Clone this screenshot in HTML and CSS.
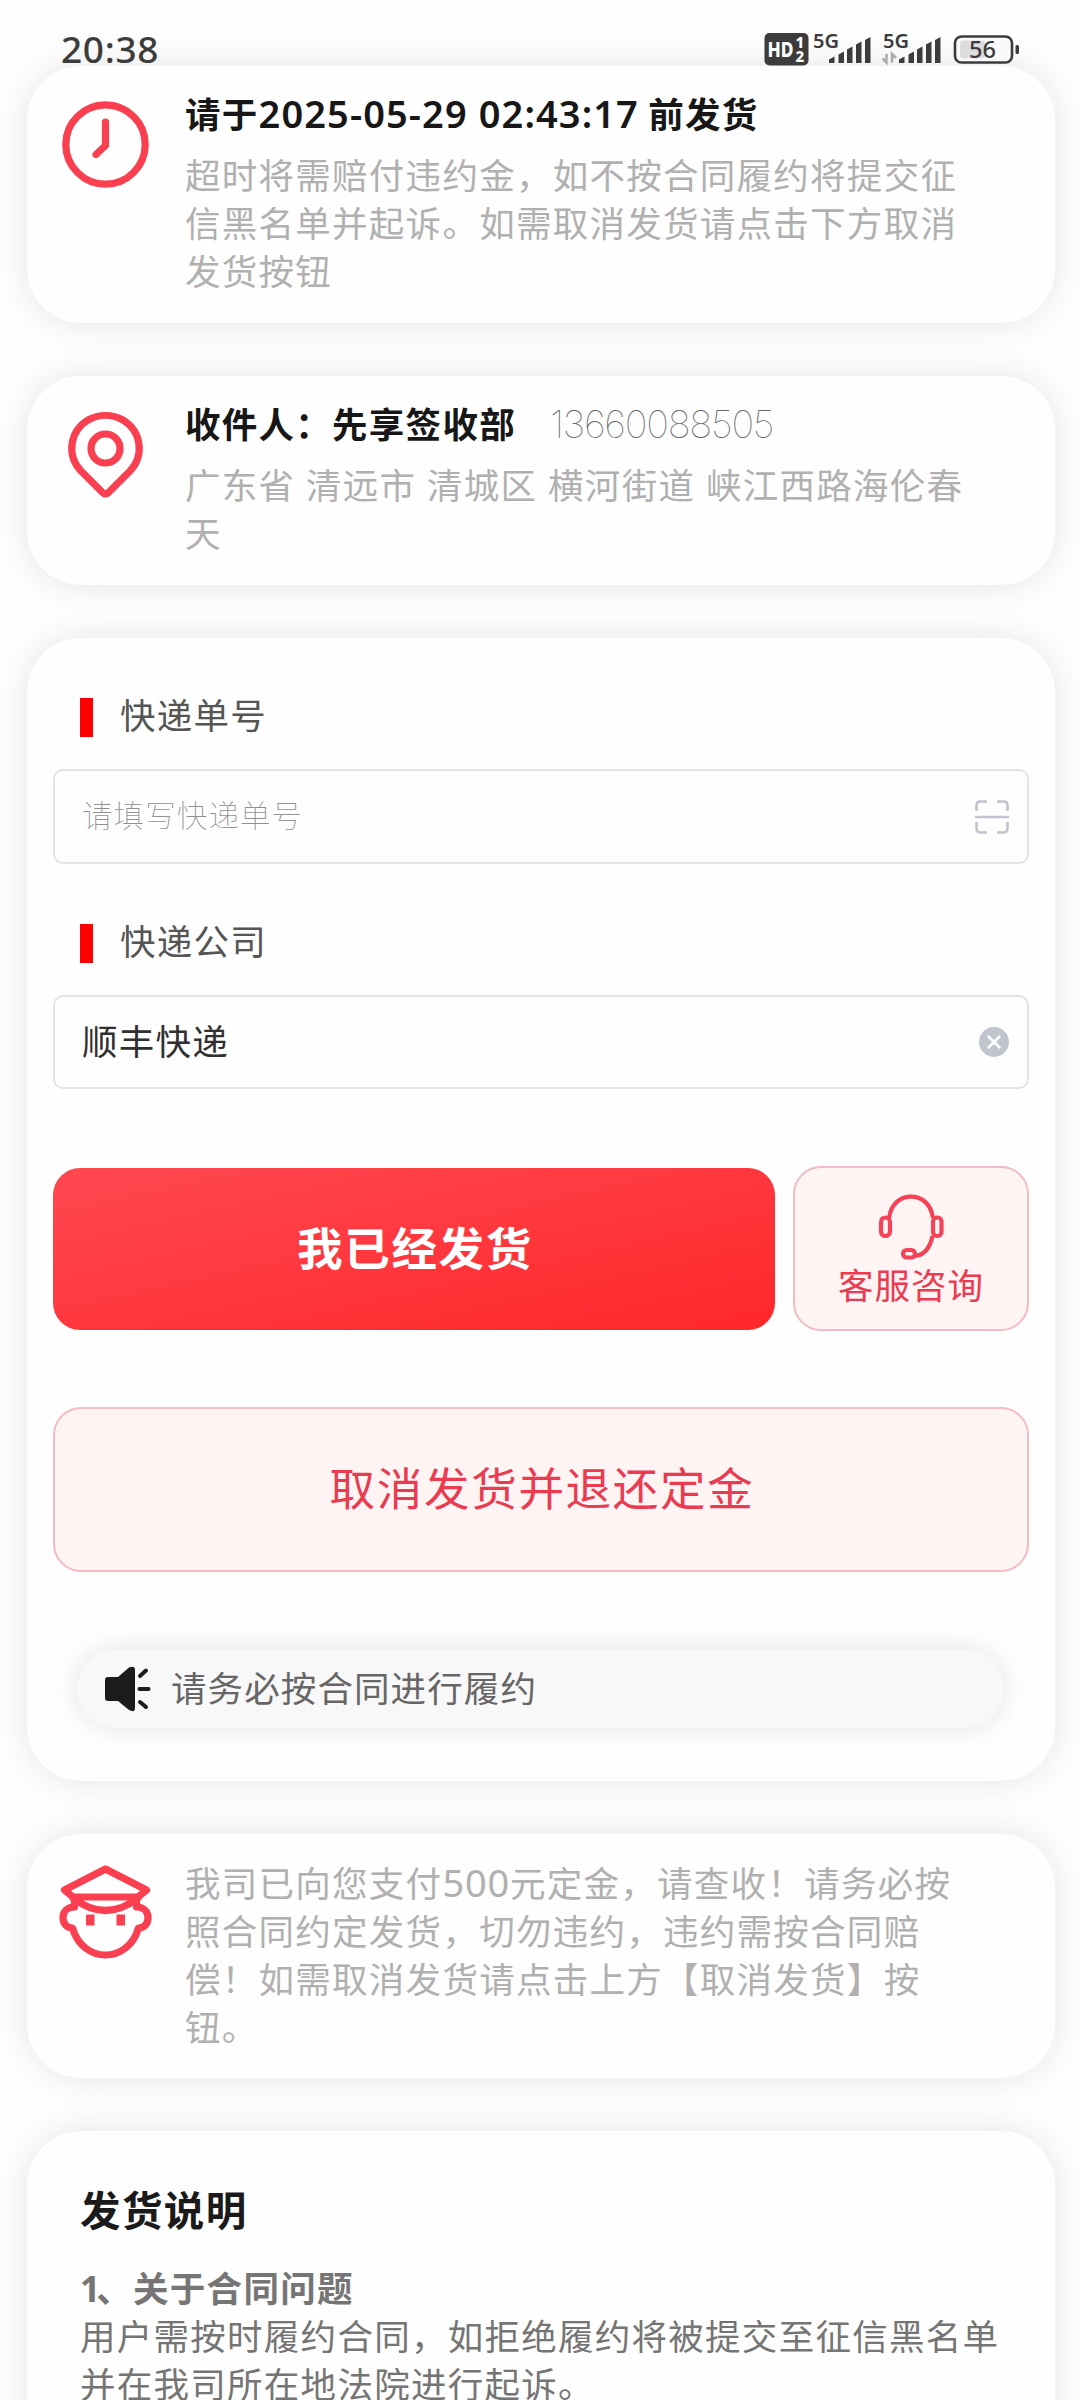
FILE: index.html
```html
<!DOCTYPE html>
<html lang="zh-CN">
<head>
<meta charset="utf-8">
<title>发货</title>
<link rel="stylesheet" href="styles.css">
</head>
<body>
<div class="screen">
  <header class="status">
    <span class="clock">20:38</span>
    <span class="indicators">
      <svg class="status-icons" viewBox="764 30 260 38">
        <rect x="764.5" y="33" width="44" height="32.500" rx="5" fill="#3c3c3c"/>
        <text class="hd" x="767.500" y="56.500" textLength="26" lengthAdjust="spacingAndGlyphs">HD</text>
        <text class="sim" x="795.500" y="47.500">1</text>
        <text class="sim" x="795.500" y="61.500">2</text>
        <text class="net" x="813" y="48.200" textLength="26" lengthAdjust="spacingAndGlyphs">5G</text>
        <text class="net" x="883" y="48.200" textLength="26" lengthAdjust="spacingAndGlyphs">5G</text>
        <g fill="#3c3c3c">
          <path d="M829 59.500l5.500-3v6.500h-5.500zM838.500 54.500l5.500-3v11.500h-5.500zM847 49.500l5.500-3v16.500h-5.500zM856 44.500l5.500-3v21.500h-5.500zM865 40l5.500-3v26h-5.500z"/>
          <path d="M899 59.500l5.500-3v6.500h-5.500zM908.500 54.500l5.500-3v11.500h-5.500zM917 49.500l5.500-3v16.500h-5.500zM926 44.500l5.500-3v21.500h-5.500zM935 40l5.500-3v26h-5.500z"/>
        </g>
        <path d="M886.500 54v8.500l-4-4M892 62.500V54l4 4" fill="none" stroke="#aaa" stroke-width="2.500"/>
        <rect x="955" y="36.500" width="57" height="26" rx="6.500" fill="#fafafa" stroke="#3c3c3c" stroke-width="2.600"/>
        <rect x="960" y="40.500" width="25" height="18" rx="3" fill="#ddd"/>
        <rect x="1015.500" y="45" width="3.500" height="9" rx="1.500" fill="#3c3c3c"/>
        <text class="battery" x="969" y="58" textLength="27" lengthAdjust="spacingAndGlyphs">56</text>
      </svg>
    </span>
  </header>

  <main class="cards">
    <section class="card info deadline">
      <svg class="icon" viewBox="0 0 96 96"><circle cx="48.500" cy="48.500" r="39.700" class="line"/><path class="line" d="M48.500 26V49.500L39 58.500"/></svg>
      <div class="body">
        <h2>请于<span class="num">2025-05-29 02:43:17</span> 前发货</h2>
        <p>超时将需赔付违约金，如不按合同履约将提交征信黑名单并起诉。如需取消发货请点击下方取消发货按钮</p>
      </div>
    </section>

    <section class="card info address">
      <svg class="icon" viewBox="0 0 96 96"><circle cx="48.500" cy="41.500" r="14.500" class="line"/><path class="line" d="M51.500 85.500Q48.500 88 45.500 85.500L24 64C9 48 13 24 31 13C42 7 55 7 66 13C84 24 88 48 73 64Z"/></svg>
      <div class="body">
        <h2>收件人：先享签收部<span class="phone">13660088505</span></h2>
        <p>广东省 清远市 清城区 横河街道 峡江西路海伦春天</p>
      </div>
    </section>

    <section class="card form">
      <label class="field-label"><span>快递单号</span></label>
      <div class="field">
        <span class="placeholder">请填写快递单号</span>
        <svg class="scan" viewBox="0 0 34 34"><path d="M1.500 11V5.500Q1.500 1.500 5.500 1.500H12M22 1.500H28.500Q32.500 1.500 32.500 5.500V11M1.500 22V28.500Q1.500 32.500 5.500 32.500H12M22 32.500H28.500Q32.500 32.500 32.500 28.500V22M0 17H34"/></svg>
      </div>
      <label class="field-label second"><span>快递公司</span></label>
      <div class="field company">
        <span class="value">顺丰快递</span>
        <svg class="clear" viewBox="0 0 30 30"><circle cx="15" cy="15" r="15" fill="#c0c4cc"/><path d="M9.500 9.500L20.500 20.500M20.500 9.500L9.500 20.500" stroke="#fff" stroke-width="2.500" stroke-linecap="round"/></svg>
      </div>
      <div class="actions">
        <button class="primary">我已经发货</button>
        <button class="outline service">
          <svg viewBox="0 0 66 66"><path d="M11 24C13 10 22 2.700 33 2.700S53 10 55 24M54.500 42C52 54 46 61 37 62"/><rect x="3" y="23.500" width="9" height="18.500" rx="4.500"/><rect x="55" y="23.500" width="8.500" height="18.500" rx="4"/><rect x="25" y="56" width="12" height="7.500" rx="3.700"/></svg>
          <span>客服咨询</span>
        </button>
      </div>
      <button class="outline cancel">取消发货并退还定金</button>
      <div class="notice">
        <svg viewBox="0 0 46 46"><path d="M0 14Q0 11 3 11H13L24 1.500Q30 -1 30 4V42Q30 47 24 44L13 35H3Q0 35 0 32Z" fill="#1c1c1c"/><path d="M35 10L41 4.500M34.500 23H43.500M35 36L41 41" stroke="#1c1c1c" stroke-width="4" stroke-linecap="round"/></svg>
        <span>请务必按合同进行履约</span>
      </div>
    </section>

    <section class="card info company-note">
      <svg class="icon" viewBox="0 0 96 96"><path class="line" d="M48.500 6L7.500 27L16 34H81L89.500 27ZM16 35Q48.500 60 81 35M17.500 35V44C2 44 3 65 15.500 65C26 101 71 101 81.500 65C94 65 95 44 79.500 44V35"/><path d="M29 51.500h8.500v11h-8.500zM59.500 51.500h8.500v11h-8.500z" fill="#fa3f50"/></svg>
      <div class="body">
        <p>我司已向您支付<span class="amount">500</span>元定金，请查收！请务必按照合同约定发货，切勿违约，违约需按合同赔偿！如需取消发货请点击上方【取消发货】按钮。</p>
      </div>
    </section>

    <section class="card help">
      <h3>发货说明</h3>
      <h4><span class="idx">1</span>、关于合同问题</h4>
      <p>用户需按时履约合同，如拒绝履约将被提交至征信黑名单并在我司所在地法院进行起诉。</p>
    </section>
  </main>
</div>
</body>
</html>
```
FILE: styles.css
```css
* { box-sizing: border-box; margin: 0; }

body {
  background: #fefefe;
  font-family: "Noto Sans CJK SC", sans-serif;
  font-size: 35.5px;
  letter-spacing: 1.27px;
  line-height: 48px;
}

.screen {
  width: 1080px;
  height: 2400px;
  overflow: hidden;
}

.status {
  position: relative;
  z-index: 1;
  display: flex;
  justify-content: space-between;
  height: 66px;
  padding: 0 56px 0 61px;
}

.clock {
  padding-top: 25px;
  color: #3c3c3c;
  font: 500 37px/48px "Noto Sans", sans-serif;
  letter-spacing: 0.7px;
}

.indicators { padding-top: 30px; }
.status-icons { display: block; width: 260px; height: 38px; overflow: visible; }
.status-icons text { font-family: "Noto Sans", sans-serif; fill: #3c3c3c; letter-spacing: 0; }
.status-icons .hd { font-size: 20.5px; font-weight: 800; fill: #fff; }
.status-icons .sim { font-size: 15px; font-weight: 800; fill: #fff; }
.status-icons .net { font-size: 19.5px; font-weight: 600; }
.status-icons .battery { font-size: 23px; font-weight: 500; }

.cards {
  display: flex;
  flex-direction: column;
  gap: 53px;
  padding: 0 25px 0 27px;
}

.card {
  border-radius: 54px;
  background: #fefefe;
  box-shadow: 0 0 36px rgba(0, 0, 0, 0.1);
}

.info {
  display: flex;
  gap: 32px;
  padding: 23px 90px 0 30px;
}

.icon { flex: none; width: 96px; height: 96px; }
.icon .line {
  fill: none;
  stroke: #fa3f50;
  stroke-width: 7.2;
  stroke-linecap: round;
  stroke-linejoin: round;
}
.body { flex: 1; }
.info h2 {
  height: 48px;
  margin-bottom: 13px;
  color: #171717;
  font-size: 35.5px;
  font-weight: 700;
  white-space: nowrap;
}
.info p { color: #b0b0b0; word-spacing: 1.5px; }

.deadline { height: 257px; }
.deadline .icon { margin-top: 7px; }
.num { font-family: "Noto Sans", sans-serif; font-size: 38px; font-weight: 650; letter-spacing: 1.1px; }

.address { height: 209px; }
.address .icon { margin-top: 8px; }
.phone {
  margin-left: 34px;
  color: #666;
  font: 100 38.5px/48px Inter, sans-serif;
  letter-spacing: -1.3px;
}

.form { height: 1143px; padding: 54px 26px 0; }
.field-label {
  display: flex;
  align-items: center;
  gap: 27px;
  height: 48px;
  padding-left: 27px;
  color: #555;
}
.field-label::before {
  width: 13px;
  height: 39px;
  margin-top: 3px;
  background: #f00;
  content: "";
}
.field-label span { padding-bottom: 5px; }
.field-label.second { margin-top: 54px; }
.field {
  display: flex;
  align-items: center;
  justify-content: space-between;
  height: 95px;
  margin-top: 29px;
  padding: 0 18px 0 27px;
  border: 2px solid #e4e4e4;
  border-radius: 10px;
}
.field.company { height: 94px; }
.placeholder { padding-bottom: 5px; color: #909090; font-size: 30.5px; font-weight: 100; letter-spacing: 1.1px; }
.value { padding-bottom: 5px; color: #303030; }
.scan { width: 34px; height: 34px; fill: none; stroke: #c0c4cc; stroke-width: 2.6; }
.clear { width: 30px; height: 30px; }

.actions { display: flex; gap: 18px; align-items: center; margin-top: 77px; }
button { border: 0; padding: 0; font-family: inherit; letter-spacing: 1.7px; font-size: 45.5px; }
.primary {
  width: 722px;
  height: 162px;
  padding: 0 0 6px 2px;
  border-radius: 27px;
  background: linear-gradient(to bottom right, #ff4851, #ff2729);
  color: #fff;
  font-weight: 700;
}
.outline {
  border: 2px solid #f2bcc2;
  border-radius: 28px;
  background: #fff4f4;
  color: #ea3b50;
}
.service {
  display: flex;
  flex-direction: column;
  align-items: center;
  flex: 1;
  height: 165px;
  padding-top: 26px;
  font-size: 35.5px;
  letter-spacing: 1px;
  line-height: 48px;
}
.service svg { width: 66px; height: 66px; fill: none; stroke: #f54257; stroke-width: 4.2; }
.cancel { display: block; width: 100%; height: 165px; margin-top: 76px; padding: 0 0 7px 2px; }

.notice {
  display: flex;
  align-items: center;
  gap: 20px;
  height: 79px;
  margin: 77px 25px 0 24px;
  padding-left: 28px;
  border-radius: 40px;
  background: #f8f8f8;
  box-shadow: 0 0 26px rgba(0, 0, 0, 0.11);
  color: #666;
}
.notice svg { width: 46px; height: 46px; }
.notice span { padding-bottom: 4px; letter-spacing: 1.1px; }

.company-note { height: 244px; padding-top: 24px; }
.company-note .icon { margin-top: 5px; }
.amount { font-family: "Noto Sans", sans-serif; font-size: 38px; line-height: 1; letter-spacing: 0.8px; }

.help { height: 400px; padding: 54px 45px 0 53px; color: #757575; }
.help h3 { color: #1a1a1a; font-size: 40.5px; letter-spacing: 1.4px; line-height: 48px; }
.help h4 { margin-top: 30px; font-size: 35.5px; }
.help p { margin-top: -1px; }
.idx { font-family: "Noto Sans", sans-serif; letter-spacing: -4px; }
```
